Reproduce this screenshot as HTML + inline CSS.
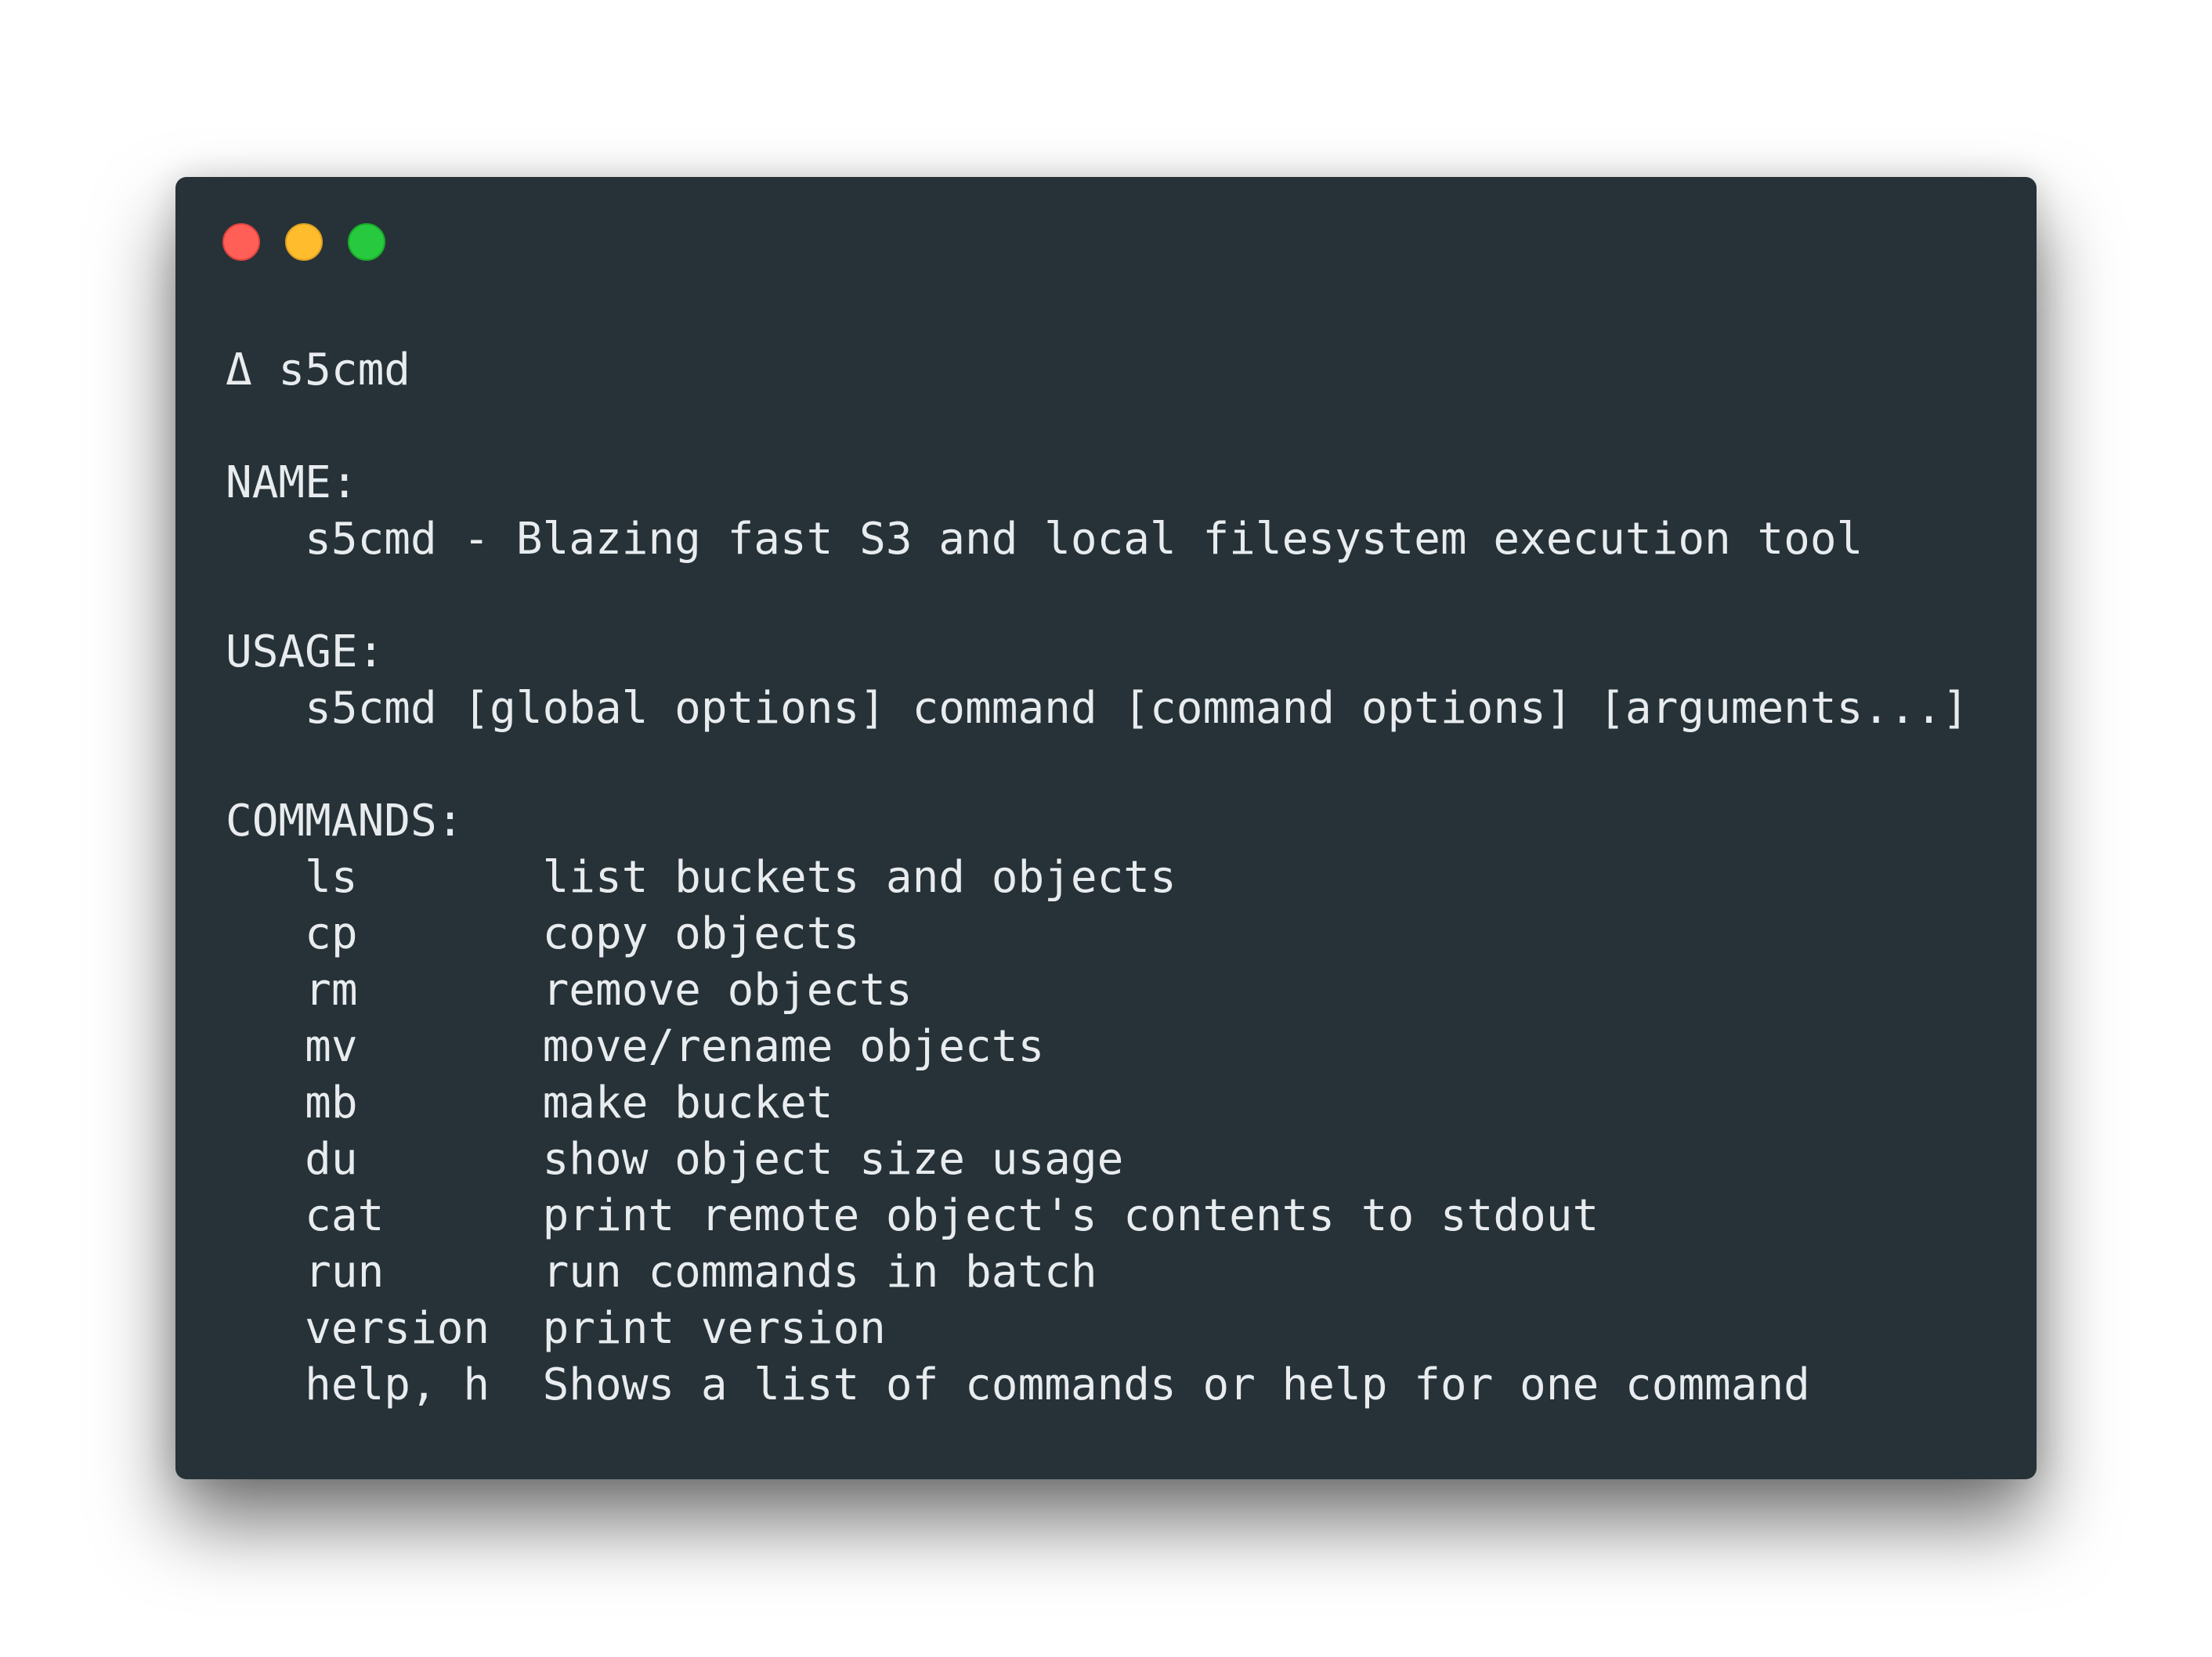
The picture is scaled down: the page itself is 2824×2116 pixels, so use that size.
<!DOCTYPE html>
<html><head><meta charset="utf-8"><style>
html,body{margin:0;padding:0;background:#fff;width:2824px;height:2116px;overflow:hidden}
.win{position:absolute;left:224px;top:226px;width:2376px;height:1663px;background:#263238;border-radius:14px;box-shadow:0 55px 100px rgba(0,0,0,0.55),0 0 40px rgba(0,0,0,0.14)}
.dot{position:absolute;top:285px;width:48px;height:48px;border-radius:50%;box-sizing:border-box}
pre{position:absolute;left:288px;top:437px;margin:0;font-family:"DejaVu Sans Mono","Liberation Mono",monospace;font-size:56px;line-height:72px;color:#e8ecee}
</style></head><body>
<div class="win"></div>
<div class="dot" style="left:284px;background:#ff5f56;border:2px solid #e0443e"></div>
<div class="dot" style="left:364px;background:#ffbd2e;border:2px solid #dea123"></div>
<div class="dot" style="left:444px;background:#27c93f;border:2px solid #1aab29"></div>
<pre>Δ s5cmd

NAME:
   s5cmd - Blazing fast S3 and local filesystem execution tool

USAGE:
   s5cmd [global options] command [command options] [arguments...]

COMMANDS:
   ls       list buckets and objects
   cp       copy objects
   rm       remove objects
   mv       move/rename objects
   mb       make bucket
   du       show object size usage
   cat      print remote object's contents to stdout
   run      run commands in batch
   version  print version
   help, h  Shows a list of commands or help for one command</pre>
</body></html>
